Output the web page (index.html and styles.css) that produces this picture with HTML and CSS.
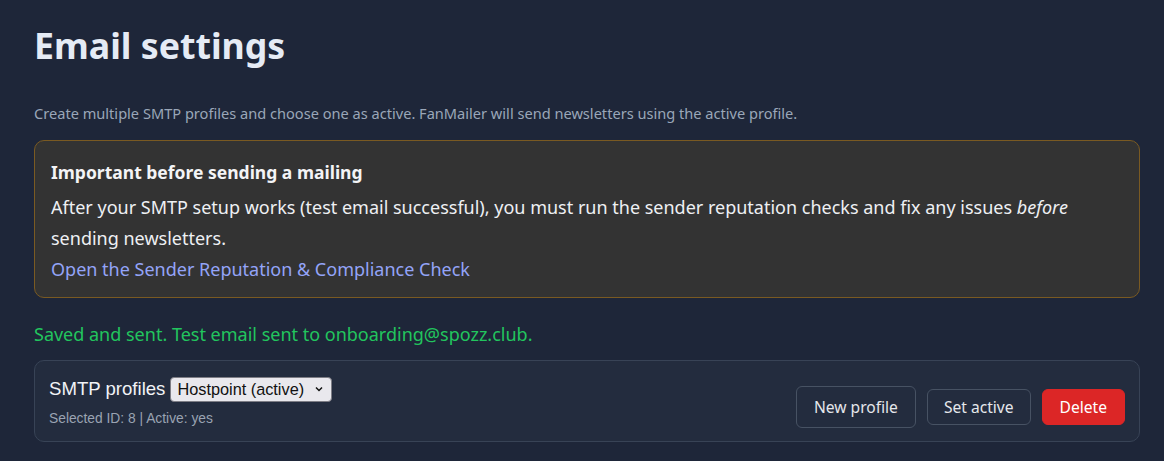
FILE: index.html
```html
<!DOCTYPE html>
<html lang="en">
<head>
<meta charset="utf-8">
<title>Email settings</title>
<link rel="stylesheet" href="styles.css">
</head>
<body>
<main class="page">
  <h1 class="title">Email settings</h1>
  <p class="intro">Create multiple SMTP profiles and choose one as active. FanMailer will send newsletters using the active profile.</p>
  <section class="notice">
    <div class="notice-title">Important before sending a mailing</div>
    <p class="notice-text">After your SMTP setup works (test email successful), you must run the sender reputation checks and fix any issues <em>before</em> sending newsletters.</p>
    <a class="notice-link" href="#">Open the Sender Reputation &amp; Compliance Check</a>
  </section>
  <p class="success">Saved and sent. Test email sent to onboarding@spozz.club.</p>
  <section class="card">
    <div class="card-left">
      <div class="profile-row">
        <span class="profile-label">SMTP profiles</span>
        <span class="select">Hostpoint (active)<svg class="chev" width="8" height="6" viewBox="0 0 8 6"><path d="M1 1.5 L4 4.5 L7 1.5" fill="none" stroke="#111" stroke-width="1.5"/></svg></span>
      </div>
      <div class="meta">Selected ID: 8 | Active: yes</div>
    </div>
    <div class="actions">
      <button class="btn btn-big">New profile</button>
      <button class="btn">Set active</button>
      <button class="btn btn-danger">Delete</button>
    </div>
  </section>
</main>
</body>
</html>
```
FILE: styles.css
```css
html, body {
  margin: 0;
  padding: 0;
}
body {
  background: #1e2639;
  font-family: "Noto Sans", "Open Sans", sans-serif;
  color: #e5e7eb;
  height: 461px;
  overflow: hidden;
}
.page {
  padding: 21px 24px 0 34px;
}
.title {
  margin: 0;
  font-size: 35.7px;
  font-weight: 700;
  line-height: 48px;
  color: #e5ebf5;
}
.intro {
  margin: 34px 0 0;
  font-size: 14.6px;
  line-height: 20px;
  color: #9aa6b8;
}
.notice {
  margin-top: 17px;
  background: #333333;
  border: 1px solid #7a5a22;
  border-radius: 10px;
  padding: 18px 16px 13px;
}
.notice-title {
  font-weight: 700;
  font-size: 17.5px;
  line-height: 26px;
  color: #f3f4f6;
}
.notice-text {
  margin: 6.5px 0 0;
  font-size: 18px;
  line-height: 31px;
  color: #eef0f3;
}
.notice-link {
  display: block;
  font-size: 18px;
  line-height: 30px;
  color: #93a4f8;
  text-decoration: none;
}
.success {
  margin: 23px 0 0;
  font-size: 18px;
  line-height: 26px;
  color: #22c55e;
}
.card {
  margin-top: 13px;
  background: #232c3e;
  border: 1px solid #384356;
  border-radius: 10px;
  padding: 16px 14px 13px;
  display: flex;
  justify-content: space-between;
  align-items: flex-end;
}
.profile-row {
  display: flex;
  align-items: center;
  gap: 5px;
}
.profile-label {
  font-family: "Liberation Sans", Arial, sans-serif;
  font-size: 18.6px;
  color: #f1f3f6;
}
.select {
  display: inline-flex;
  align-items: center;
  gap: 11px;
  height: 25px;
  padding: 0 8px 0 6px;
  background: #e9e8ed;
  border: 1px solid #7d7d85;
  border-radius: 4px;
  box-sizing: border-box;
  font-family: "Liberation Sans", Arial, sans-serif;
  font-size: 16.3px;
  color: #111;
}
.meta {
  margin-top: 8px;
  font-family: "Liberation Sans", Arial, sans-serif;
  font-size: 13.8px;
  line-height: 18px;
  color: #9aa3b2;
}
.actions {
  display: flex;
  align-items: center;
  gap: 11px;
}
.btn {
  font-family: "Noto Sans", "Open Sans", sans-serif;
  font-size: 15.6px;
  height: 36px;
  padding: 0 16px;
  background: #232c3e;
  color: #e5e7eb;
  border: 1px solid #475263;
  border-radius: 6px;
}
.btn-big {
  height: 42px;
  padding: 0 17px;
}
.btn-danger {
  background: #dc2626;
  border-color: #dc2626;
  color: #fff;
  padding: 0 17px;
}
```
